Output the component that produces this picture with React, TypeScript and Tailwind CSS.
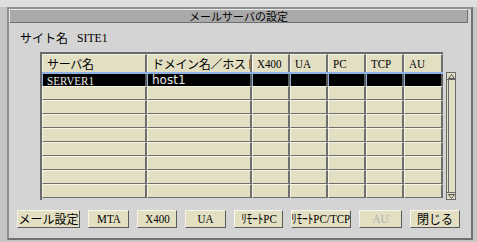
import React from 'react';

const jp = { fontFamily: '"Noto Sans CJK JP", "DejaVu Sans", sans-serif' };
const narrow = { fontFamily: '"Liberation Serif", "Noto Sans CJK JP", serif' };

const columns = [
  { label: 'サーバ名', w: 'w-[105px]' },
  { label: 'ドメイン名／ホスト', w: 'w-[105px]' },
  { label: 'X400', w: 'w-[38px]' },
  { label: 'UA', w: 'w-[38px]' },
  { label: 'PC', w: 'w-[38px]' },
  { label: 'TCP', w: 'w-[38px]' },
  { label: 'AU', w: 'w-[39px]' },
];

const buttons = [
  { label: 'メール設定', w: 'w-[63px]', jp: true },
  { label: 'MTA', w: 'w-[41px]' },
  { label: 'X400', w: 'w-[40px]' },
  { label: 'UA', w: 'w-[41px]' },
  { label: 'ﾘﾓｰﾄPC', w: 'w-[49px]' },
  { label: 'ﾘﾓｰﾄPC/TCP', w: 'w-[60px]' },
  { label: 'AU', w: 'w-[43px]', disabled: true },
  { label: '閉じる', w: 'w-[50px]', jp: true },
];

const emptyRows = Array.from({ length: 8 });

const App = () => {
  return (
    <div className="w-[477px] h-[242px] bg-[#c4c4c4] border-t-[7px] border-t-[#dedede] pl-[7px] pr-[4px] pb-[2px] overflow-hidden">
      <div className="h-full bg-[#d4d4d4] border-2 border-t-[#909090] border-l-[#909090] border-r-[#707070] border-b-[#707070] flex flex-col">
        {/* title bar */}
        <div className="h-[14px] mr-[3px] bg-[#a9a9a9] border border-t-[#e8e8e8] border-l-[#e8e8e8] border-r-[#707070] border-b-[#707070] flex items-center justify-center">
          <span className="text-[11px] leading-none text-black" style={jp}>メールサーバの設定</span>
        </div>

        <div className="flex items-center pl-[11px] mt-[8px] h-[14px] text-[12px] text-black">
          <span style={jp}>サイト名</span>
          <span className="ml-[9px] inline-block text-[13px] scale-x-90 origin-left" style={narrow}>SITE1</span>
        </div>

        {/* table + scrollbar */}
        <div className="flex mt-[7px] ml-[31px]">
          <div className="border-t-2 border-l-2 border-t-[#6a6a6a] border-l-[#6a6a6a] bg-[#d4d4d4]">
            <div className="flex h-[18px]">
              {columns.map((c) => (
                <div
                  key={c.label}
                  className={`${c.w} overflow-hidden whitespace-nowrap bg-[#e3dfc3] border-t border-l border-t-[#f6f4e6] border-l-[#f6f4e6] border-r-2 border-r-[#707070] flex items-center pl-[4px] text-black`}
                >
                  {/^[A-Z0-9]+$/.test(c.label) ? (
                    <span className="inline-block text-[13px] scale-x-85 origin-left" style={narrow}>{c.label}</span>
                  ) : (
                    <span className="text-[12px] tracking-[-0.3px]" style={jp}>{c.label}</span>
                  )}
                </div>
              ))}
            </div>
            <div className="flex h-[14px] bg-black border-t-2 border-t-[#8fb2e6]">
              {columns.map((c, i) => (
                <div
                  key={c.label}
                  className={`${c.w} border-l border-l-[#8fb2e6] border-r-2 border-r-[#5a5a5a] flex items-center pl-[4px] text-[#e8e8e8] overflow-hidden whitespace-nowrap`}
                >
                  {i === 0 && <span className="inline-block text-[13px] scale-x-85 origin-left leading-none" style={narrow}>SERVER1</span>}
                  {i === 1 && <span className="text-[12px] leading-none" style={{ fontFamily: '"DejaVu Sans", sans-serif' }}>host1</span>}
                </div>
              ))}
            </div>
            {emptyRows.map((_, r) => (
              <div key={r} className="flex h-[14px]">
                {columns.map((c) => (
                  <div
                    key={c.label}
                    className={`${c.w} bg-[#e3dfc3] border-t border-l border-t-[#f6f4e6] border-l-[#f6f4e6] border-r-2 border-b border-r-[#6e6e6e] border-b-[#6e6e6e]`}
                  />
                ))}
              </div>
            ))}
          </div>

          {/* scrollbar */}
          <div className="ml-[3px] mt-[20px] w-[10px] h-[128px] flex flex-col border border-[#6a6a6a] bg-[#e3dfc3]">
            <div className="h-[7px] flex items-center justify-center border-b border-[#6a6a6a]">
              <svg width="7" height="5" viewBox="0 0 7 5">
                <path d="M3.5 0.5 L6.5 4.5 L0.5 4.5 Z" fill="none" stroke="#505050" strokeWidth="1" />
              </svg>
            </div>
            <div className="flex-1 border-l border-l-[#6a6a6a] ml-[1px]" />
            <div className="h-[7px] flex items-center justify-center border-t border-[#6a6a6a]">
              <svg width="7" height="5" viewBox="0 0 7 5">
                <path d="M3.5 4.5 L6.5 0.5 L0.5 0.5 Z" fill="none" stroke="#505050" strokeWidth="1" />
              </svg>
            </div>
          </div>
        </div>

        {/* buttons */}
        <div className="flex items-center gap-[8px] ml-[8px] mt-[10px]">
          {buttons.map((b) => (
            <div
              key={b.label}
              className={`${b.w} h-[18px] bg-[#e3dfc3] border border-t-[#f8f6ea] border-l-[#f8f6ea] border-r-[#5a5a5a] border-b-[#5a5a5a] flex items-center justify-center whitespace-nowrap ${b.disabled ? 'text-[#b0b0b0]' : 'text-black'}`}
            >
              {b.jp ? (
                <span className="text-[12px]" style={jp}>{b.label}</span>
              ) : (
                <span className="inline-block text-[13px] scale-x-85" style={narrow}>{b.label}</span>
              )}
            </div>
          ))}
        </div>
      </div>
    </div>
  );
};

export default App;
